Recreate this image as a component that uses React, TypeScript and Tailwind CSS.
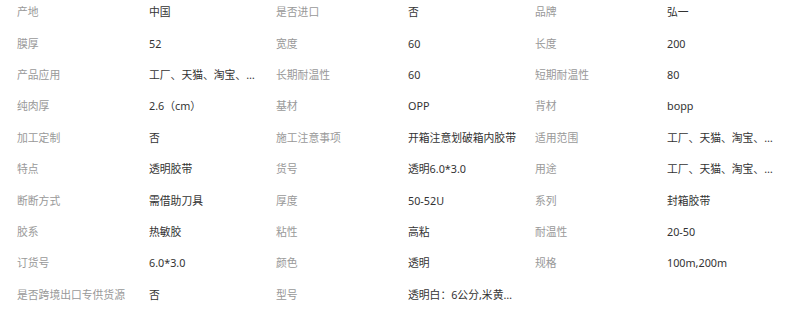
const ROWS: [string, string][][] = [
  [['产地', '中国'], ['是否进口', '否'], ['品牌', '弘一']],
  [['膜厚', '52'], ['宽度', '60'], ['长度', '200']],
  [['产品应用', '工厂、天猫、淘宝、京东、拼多多'], ['长期耐温性', '60'], ['短期耐温性', '80']],
  [['纯肉厚', '2.6（cm）'], ['基材', 'OPP'], ['背材', 'bopp']],
  [['加工定制', '否'], ['施工注意事项', '开箱注意划破箱内胶带'], ['适用范围', '工厂、天猫、淘宝、京东、拼多多']],
  [['特点', '透明胶带'], ['货号', '透明6.0*3.0'], ['用途', '工厂、天猫、淘宝、京东、拼多多']],
  [['断断方式', '需借助刀具'], ['厚度', '50-52U'], ['系列', '封箱胶带']],
  [['胶系', '热敏胶'], ['粘性', '高粘'], ['耐温性', '20-50']],
  [['订货号', '6.0*3.0'], ['颜色', '透明'], ['规格', '100m,200m']],
  [['是否跨境出口专供货源', '否'], ['型号', '透明白：6公分,米黄色：6公分'], null as unknown as [string, string]],
];

export default function App() {
  return (
    <div
      className="w-[800px] h-[309px] overflow-hidden bg-white text-[10.8px]"
      style={{ fontFamily: '"Noto Sans", "Noto Sans CJK SC", sans-serif' }}
    >
      <div className="-mt-[3.4px]">
        {ROWS.map((row, i) => (
          <div key={i} className="grid grid-cols-[132px_127px_132px_127px_132px_127px] h-[31.4px] items-center">
            {row.map((cell, j) =>
              cell ? (
                <div key={j} className="contents">
                  <div className="pl-[17px] text-[#999] whitespace-nowrap">{cell[0]}</div>
                  <div className="pl-[17px] text-[#333]">
                    <div className="w-[110px] truncate">{cell[1]}</div>
                  </div>
                </div>
              ) : (
                <div key={j} className="col-span-2" />
              )
            )}
          </div>
        ))}
      </div>
    </div>
  );
}
